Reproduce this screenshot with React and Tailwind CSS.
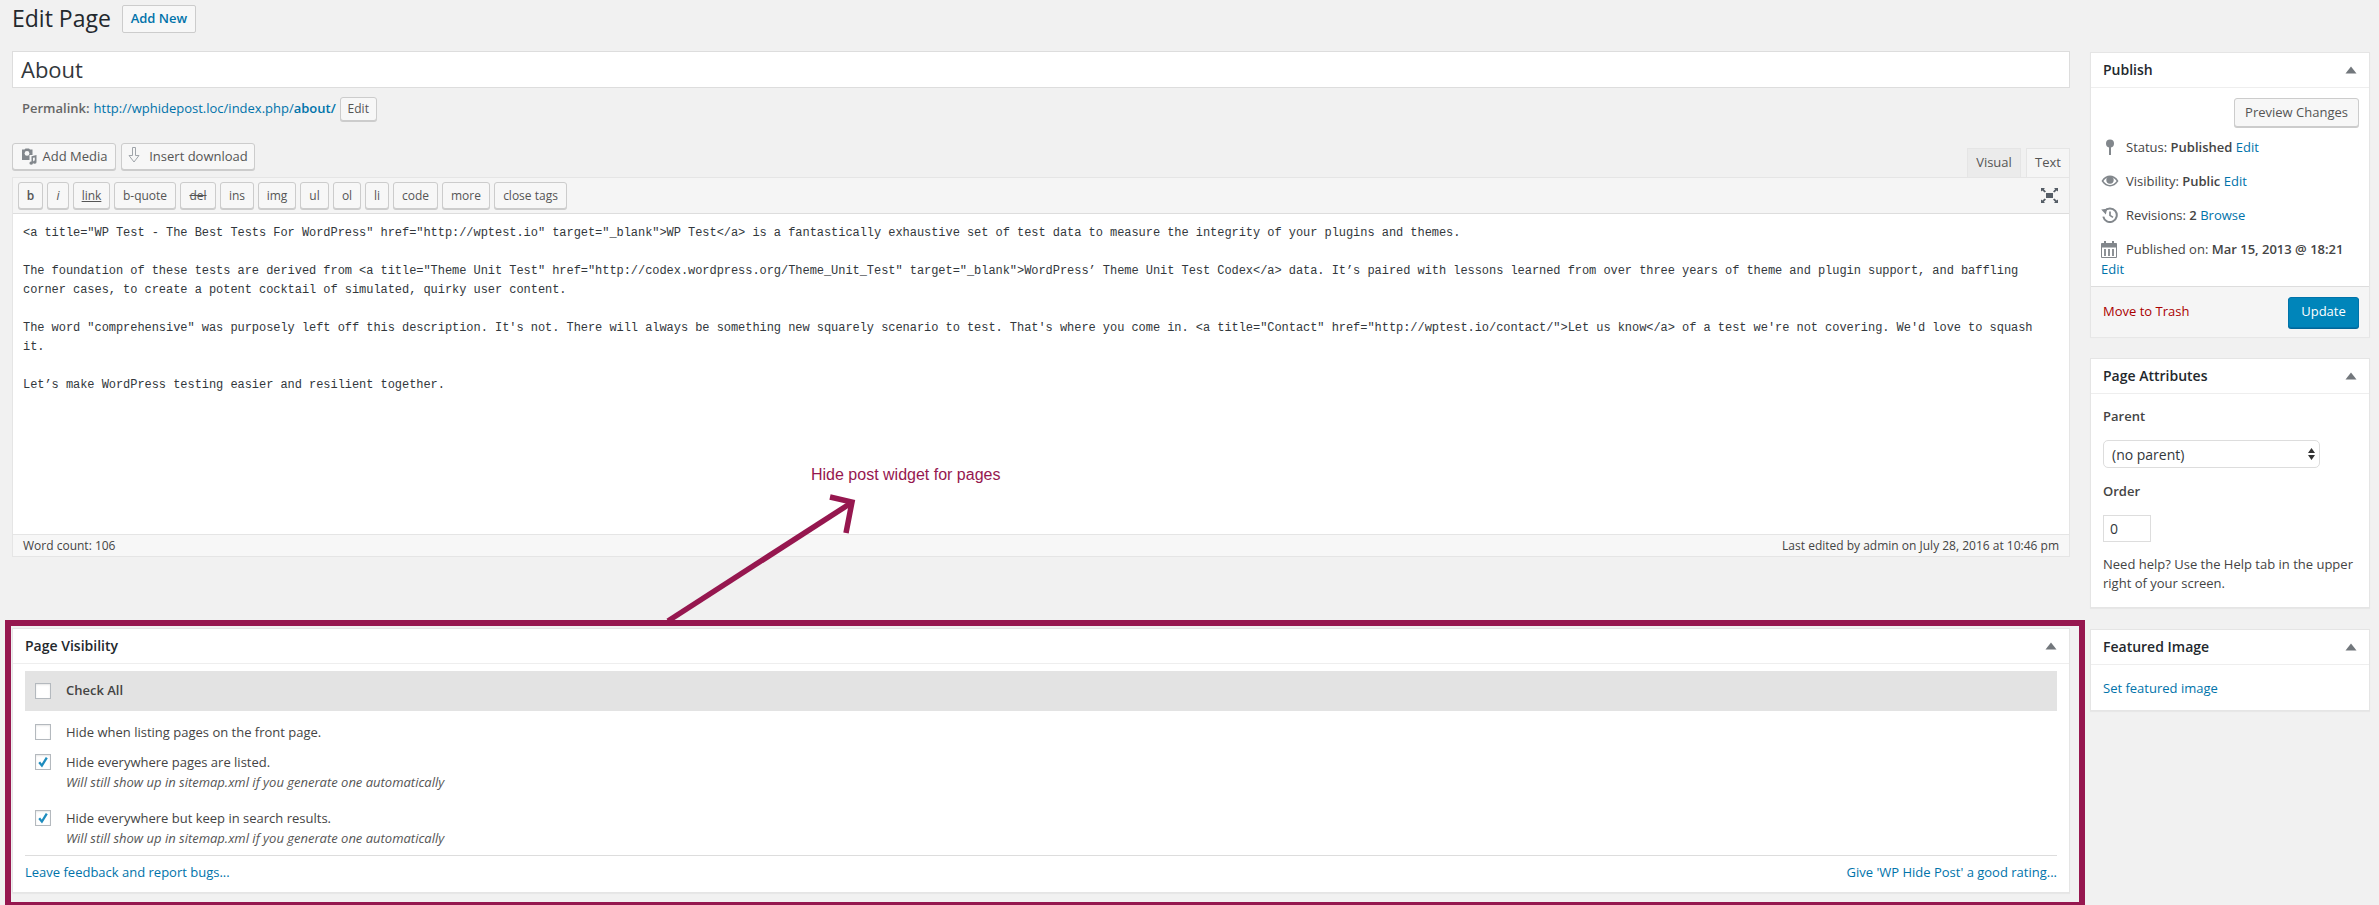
const EDITOR_TEXT = `<a title="WP Test - The Best Tests For WordPress" href="http://wptest.io" target="_blank">WP Test</a> is a fantastically exhaustive set of test data to measure the integrity of your plugins and themes.

The foundation of these tests are derived from <a title="Theme Unit Test" href="http://codex.wordpress.org/Theme_Unit_Test" target="_blank">WordPress’ Theme Unit Test Codex</a> data. It’s paired with lessons learned from over three years of theme and plugin support, and baffling
corner cases, to create a potent cocktail of simulated, quirky user content.

The word "comprehensive" was purposely left off this description. It's not. There will always be something new squarely scenario to test. That's where you come in. <a title="Contact" href="http://wptest.io/contact/">Let us know</a> of a test we're not covering. We'd love to squash
it.

Let’s make WordPress testing easier and resilient together.`;

const QUICKTAGS = [
  { label: 'b', className: 'w-[25px] font-semibold' },
  { label: 'i', className: 'w-[22px] italic' },
  { label: 'link', className: 'w-[37px] underline' },
  { label: 'b-quote', className: 'w-[62px]' },
  { label: 'del', className: 'w-[36px] line-through' },
  { label: 'ins', className: 'w-[34px]' },
  { label: 'img', className: 'w-[38px]' },
  { label: 'ul', className: 'w-[29px]' },
  { label: 'ol', className: 'w-[28px]' },
  { label: 'li', className: 'w-[24px]' },
  { label: 'code', className: 'w-[45px]' },
  { label: 'more', className: 'w-[48px]' },
  { label: 'close tags', className: 'w-[73px]' },
];

function Button({ className = '', children }) {
  return (
    <button className={`flex items-center justify-center rounded-[3px] border border-[#cccccc] bg-[#f7f7f7] text-[#555555] shadow-[0_1px_0_#cccccc] ${className}`}>
      {children}
    </button>
  );
}

function Toggle() {
  return (
    <svg width="12" height="8" viewBox="0 0 12 8" className="shrink-0">
      <path d="M6 0.5 L11.5 7.5 H0.5 Z" fill="#72777c" />
    </svg>
  );
}

function Postbox({ title, className = '', children }) {
  return (
    <div className={`border border-[#e5e5e5] bg-white shadow-[0_1px_1px_rgba(0,0,0,0.04)] ${className}`}>
      <div className="flex h-[35px] items-center justify-between border-b border-[#eeeeee] pl-3 pr-[12px]">
        <h2 className="mb-[2px] text-[14px] font-semibold text-[#23282d]">{title}</h2>
        <Toggle />
      </div>
      {children}
    </div>
  );
}

function Checkbox({ checked }) {
  return (
    <span className="relative block h-[16px] w-[16px] shrink-0 border border-[#b4b9be] bg-white shadow-[inset_0_1px_2px_rgba(0,0,0,0.1)]">
      {checked && (
        <svg width="14" height="14" viewBox="0 0 14 14" className="absolute left-[0px] top-[0px]">
          <path d="M3.2 7.2 L5.9 10.6 L10.8 2.6" fill="none" stroke="#1e8cbe" strokeWidth="2.3" />
        </svg>
      )}
    </span>
  );
}

function PinIcon() {
  return (
    <svg width="10" height="17" viewBox="0 0 10 17" className="ml-[4px]">
      <circle cx="5" cy="4.6" r="4" fill="#82878c" />
      <path d="M5 7 V16" stroke="#82878c" strokeWidth="2" />
    </svg>
  );
}

function EyeIcon() {
  return (
    <svg width="18" height="12" viewBox="0 0 18 12">
      <path d="M0.5 6 C3 2 6 0.6 9 0.6 C12 0.6 15 2 17.5 6 C15 10 12 11.4 9 11.4 C6 11.4 3 10 0.5 6 Z M2.4 6 C4.4 8.8 6.6 10 9 10 C11.4 10 13.6 8.8 15.6 6 C13.6 3.2 11.4 2 9 2 C6.6 2 4.4 3.2 2.4 6 Z" fill="#82878c" fillRule="evenodd" />
      <circle cx="9" cy="5" r="3.7" fill="#82878c" />
    </svg>
  );
}

function HistoryIcon() {
  return (
    <svg width="17" height="16" viewBox="0 0 17 16">
      <path d="M3.6 4 A6.8 6.8 0 1 1 2.3 9.6" fill="none" stroke="#82878c" strokeWidth="2" />
      <path d="M0.2 2.6 L6.2 1.8 L4.8 7.4 Z" fill="#82878c" />
      <path d="M9 4.4 V8.4 L12 10.4" fill="none" stroke="#82878c" strokeWidth="1.7" />
    </svg>
  );
}

function CalendarIcon() {
  return (
    <svg width="16" height="17" viewBox="0 0 16 17">
      <path d="M0.5 2.5 H15.5 V16.5 H0.5 Z" fill="none" stroke="#82878c" />
      <rect x="0.5" y="2.5" width="15" height="4" fill="#82878c" />
      <rect x="3" y="0" width="2" height="4" fill="#82878c" />
      <rect x="11" y="0" width="2" height="4" fill="#82878c" />
      <path d="M4 8 V15 M8 8 V15 M12 8 V15" stroke="#82878c" strokeWidth="1.8" />
    </svg>
  );
}

function MediaIcon() {
  return (
    <svg width="17" height="17" viewBox="0 0 17 17" className="mr-[5px]">
      <path d="M1 1.5 H3.5 L4.5 0.5 H8 L9 1.5 H11.5 V7 H8.5 V12 H1 Z" fill="#82878c" />
      <circle cx="6" cy="5.4" r="2.4" fill="#f7f7f7" />
      <path d="M10.5 8.2 L15.5 7 V14 A1.8 1.6 0 1 1 13.8 12.6 V9.4 L12 9.8 V15 A1.8 1.6 0 1 1 10.5 13.6 Z" fill="#82878c" />
    </svg>
  );
}

function DownloadIcon() {
  return (
    <svg width="12" height="16" viewBox="0 0 12 16" className="mb-[3px] mr-[9px]">
      <path d="M4.5 0.5 H7.5 V8.5 H11 L6 15 L1 8.5 H4.5 Z" fill="none" stroke="#a0a5aa" />
    </svg>
  );
}

function FullscreenIcon() {
  return (
    <svg width="17" height="15" viewBox="0 0 17 15">
      <rect x="5" y="5" width="7" height="5" fill="#555d66" />
      <path d="M0 0 H4 L2.8 1.2 L5 3.4 L3.6 4.4 L1.4 2.4 L0 3.6 Z M17 0 H13 L14.2 1.2 L12 3.4 L13.4 4.4 L15.6 2.4 L17 3.6 Z M0 15 H4 L2.8 13.8 L5 11.6 L3.6 10.6 L1.4 12.6 L0 11.4 Z M17 15 H13 L14.2 13.8 L12 11.6 L13.4 10.6 L15.6 12.6 L17 11.4 Z" fill="#555d66" />
    </svg>
  );
}

function Editor() {
  return (
    <div>
      <div className="mt-[22px] flex h-[34px] items-start justify-between">
        <div className="flex gap-[5px]">
          <Button className="h-[27px] w-[104px] text-[13px]"><MediaIcon />Add Media</Button>
          <Button className="h-[27px] w-[134px] text-[13px]"><DownloadIcon />Insert download</Button>
        </div>
        <div className="mt-[5px] flex h-[29px] items-stretch gap-[5px] text-[13px]">
          <div className="flex w-[54px] items-center justify-center border border-b-0 border-[#e5e5e5] bg-[#ebebeb] text-[#555555]">Visual</div>
          <div className="flex w-[44px] items-center justify-center border border-b-0 border-[#e5e5e5] bg-[#f5f5f5] text-[#555555]">Text</div>
        </div>
      </div>
      <div className="border border-[#e5e5e5] bg-white">
        <div className="flex h-[36px] items-center justify-between border-b border-[#dddddd] bg-[#f5f5f5] pl-[5px] pr-[11px]">
          <div className="flex gap-[4px]">
            {QUICKTAGS.map((tag) => (
              <Button key={tag.label} className={`h-[27px] text-[12px] ${tag.className}`}>{tag.label}</Button>
            ))}
          </div>
          <FullscreenIcon />
        </div>
        <div className="h-[320px] whitespace-pre px-[10px] pt-[10px] font-['Liberation_Mono',monospace] text-[12px] leading-[19px] tracking-[-0.05px] text-[#32373c]">
          {EDITOR_TEXT}
        </div>
        <div className="flex h-[22px] items-center justify-between border-t border-[#e5e5e5] bg-[#f7f7f7] px-[10px] text-[12px] text-[#444444]">
          <span>Word count: 106</span>
          <span>Last edited by admin on July 28, 2016 at 10:46 pm</span>
        </div>
      </div>
    </div>
  );
}

function VisibilityOption({ label, note, className = '' }) {
  return (
    <div className={`flex gap-[15px] pl-[10px] ${className}`}>
      <div className="pt-[2px]"><Checkbox checked={!!note} /></div>
      <div className="text-[13px] leading-[20px] text-[#444444]">
        <div>{label}</div>
        {note && <div className="italic text-[#555555]">{note}</div>}
      </div>
    </div>
  );
}

function PageVisibility() {
  const note = 'Will still show up in sitemap.xml if you generate one automatically';
  return (
    <div className="relative mt-[71px]">
      {/* annotation frame drawn over the box */}
      <div className="pointer-events-none absolute -left-[7px] -right-[15px] -top-[8px] h-[288px] border-[6px] border-[#96174f]" />
      {/* annotation arrow and caption */}
      <svg width="210" height="140" viewBox="0 0 210 140" className="pointer-events-none absolute left-[639px] top-[-139px]">
        <path d="M17 132 L200 14" fill="none" stroke="#96174f" strokeWidth="5.5" />
        <path d="M179 8 L201 13 L195 44" fill="none" stroke="#96174f" strokeWidth="5.5" />
      </svg>
      <div className="absolute left-[799px] top-[-163px] font-['Liberation_Sans',sans-serif] text-[16px] leading-[20px] text-[#96174f]">
        Hide post widget for pages
      </div>
      <Postbox title="Page Visibility" className="h-[265px]">
        <div className="px-3 pt-[7px]">
          <div className="flex h-[40px] items-center gap-[15px] bg-[#e3e3e3] pl-[10px] text-[13px] font-semibold text-[#444444]">
            <Checkbox />
            Check All
          </div>
          <VisibilityOption className="mt-[11px]" label="Hide when listing pages on the front page." />
          <VisibilityOption className="mt-[10px]" label="Hide everywhere pages are listed." note={note} />
          <VisibilityOption className="mt-[16px]" label="Hide everywhere but keep in search results." note={note} />
          <div className="mt-[7px] flex h-[34px] items-center justify-between border-t border-[#dddddd] text-[13px] text-[#0073aa]">
            <a>Leave feedback and report bugs...</a>
            <a>Give 'WP Hide Post' a good rating...</a>
          </div>
        </div>
      </Postbox>
    </div>
  );
}

function PubRow({ icon, className = '', children }) {
  return (
    <div className={`flex items-center text-[13px] leading-[20px] text-[#444444] ${className}`}>
      <span className="flex w-[25px] shrink-0 items-center">{icon}</span>
      <span>{children}</span>
    </div>
  );
}

function Sidebar() {
  return (
    <aside className="mt-[52px] flex w-[280px] shrink-0 flex-col">
      <Postbox title="Publish" className="h-[285px]">
        <div className="flex justify-end pr-[10px] pt-[10px]">
          <Button className="h-[29px] w-[125px] text-[13px]">Preview Changes</Button>
        </div>
        <div className="pl-[10px] pt-[10px]">
          <PubRow icon={<PinIcon />}>Status: <b className="font-semibold">Published</b> <a className="text-[#0073aa]">Edit</a></PubRow>
          <PubRow icon={<EyeIcon />} className="mt-[14px]">Visibility: <b className="font-semibold">Public</b> <a className="text-[#0073aa]">Edit</a></PubRow>
          <PubRow icon={<HistoryIcon />} className="mt-[14px]">Revisions: <b className="font-semibold">2</b> <a className="text-[#0073aa]">Browse</a></PubRow>
          <PubRow icon={<CalendarIcon />} className="mt-[14px]">Published on: <b className="font-semibold">Mar 15, 2013 @ 18:21</b></PubRow>
          <a className="block text-[13px] leading-[20px] text-[#0073aa]">Edit</a>
        </div>
        <div className="mt-[7px] flex h-[51px] items-center justify-between border-t border-[#dddddd] bg-[#f5f5f5] pl-3 pr-[10px]">
          <a className="text-[13px] text-[#aa0000]">Move to Trash</a>
          <button className="flex h-[31px] w-[71px] items-center justify-center rounded-[3px] border border-[#0073aa] bg-[#0085ba] text-[13px] text-white shadow-[0_1px_0_#006799]">Update</button>
        </div>
      </Postbox>
      <Postbox title="Page Attributes" className="mt-[21px] h-[250px]">
        <div className="px-3">
          <div className="mt-[12px] text-[13px] font-semibold leading-[20px] text-[#444444]">Parent</div>
          <div className="mt-[14px] flex h-[28px] w-[217px] items-center justify-between rounded-[5px] border border-[#dddddd] bg-white pl-[8px] pr-[4px] text-[14px] text-[#32373c]">
            <span>(no parent)</span>
            <svg width="7" height="12" viewBox="0 0 7 12"><path d="M3.5 0 L7 5 H0 Z M3.5 12 L7 7 H0 Z" fill="#333333" /></svg>
          </div>
          <div className="mt-[13px] text-[13px] font-semibold leading-[20px] text-[#444444]">Order</div>
          <div className="mt-[14px] flex h-[27px] w-[48px] items-center border border-[#dddddd] pl-[6px] text-[14px] text-[#32373c]">0</div>
          <p className="mt-[13px] text-[13px] leading-[19px] text-[#444444]">Need help? Use the Help tab in the upper right of your screen.</p>
        </div>
      </Postbox>
      <Postbox title="Featured Image" className="mt-[21px] h-[82px]">
        <a className="mt-[13px] block pl-3 text-[13px] leading-[20px] text-[#0073aa]">Set featured image</a>
      </Postbox>
    </aside>
  );
}

export default function App() {
  return (
    <div className="flex h-[905px] gap-[20px] overflow-hidden bg-[#f1f1f1] pl-[12px] pr-[9px] font-['Open_Sans',sans-serif]">
      <main className="min-w-0 flex-1">
        <div className="flex h-[33px] items-end gap-[11px]">
          <h1 className="mb-[-2px] text-[23px] leading-[33px] text-[#23282d]">Edit Page</h1>
          <button className="flex h-[28px] w-[74px] items-center justify-center rounded-[2px] border border-[#cccccc] bg-[#f7f7f7] text-[13px] font-semibold text-[#0073aa]">Add New</button>
        </div>
        <div className="mt-[18px] flex h-[37px] items-center border border-[#dddddd] bg-white pl-[8px] text-[22px] text-[#32373c]">About</div>
        <div className="mt-[9px] flex h-[24px] items-center pl-[10px] text-[13px] text-[#666666]">
          <span className="mr-[4px] font-semibold">Permalink:</span>
          <a className="text-[#0073aa]">http://wphidepost.loc/index.php/<b className="font-semibold">about/</b></a>
          <Button className="ml-[4px] h-[24px] w-[37px] text-[12px]">Edit</Button>
        </div>
        <Editor />
        <PageVisibility />
      </main>
      <Sidebar />
    </div>
  );
}
